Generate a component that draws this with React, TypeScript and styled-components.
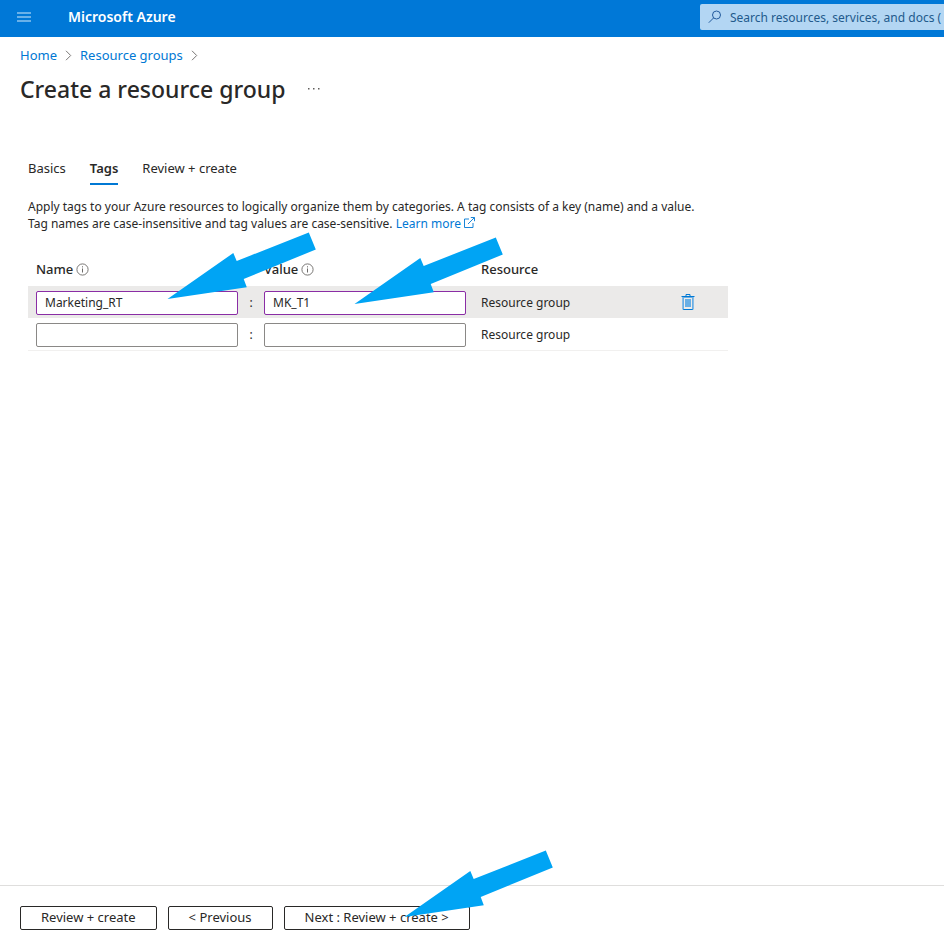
import React from "react";
import styled, { createGlobalStyle } from "styled-components";

const GlobalStyle = createGlobalStyle`
  *, *::before, *::after { box-sizing: border-box; }
  body {
    margin: 0;
    background: #fff;
    color: #292827;
    font: 13px/17px "Noto Sans", "Open Sans", sans-serif;
  }
  button, input { font: inherit; color: inherit; }
  a { color: #0078d4; text-decoration: none; }
`;

const Page = styled.div`
  display: flex;
  flex-direction: column;
  min-height: 100vh;
  overflow-x: hidden;
`;

const TopBar = styled.header`
  display: flex;
  align-items: center;
  height: 37px;
  padding: 0 0 3px 16px;
  background: #0078d7;
`;

const IconButton = styled.button`
  display: flex;
  align-items: center;
  justify-content: center;
  padding: 0;
  border: 0;
  background: transparent;
  cursor: pointer;
`;

const Brand = styled.a`
  margin: 0 auto 0 36px;
  color: #fff;
  font-size: 14px;
  font-weight: 600;
  line-height: 20px;
`;

const SearchBox = styled.label`
  display: flex;
  align-items: center;
  gap: 8px;
  flex: 0 1 244px;
  height: 26px;
  padding-left: 8px;
  border-radius: 2px 0 0 2px;
  background: #b3d6f3;
`;

const SearchInput = styled.input`
  flex: 1;
  min-width: 0;
  padding: 0;
  border: 0;
  outline: 0;
  background: transparent;
  font-size: 12px;
  &::placeholder { color: #225a8c; opacity: 1; }
`;

const Breadcrumb = styled.nav`
  display: flex;
  align-items: center;
  gap: 8px;
  padding: 9px 20px 0;
  font-size: 13px;
  line-height: 19px;
`;

const TitleRow = styled.div`
  display: flex;
  align-items: center;
  gap: 20px;
  padding: 8px 20px 0;
`;

const Title = styled.h1`
  margin: 0;
  font-size: 23px;
  font-weight: 500;
  line-height: 32px;
`;

const Main = styled.main`
  flex: 1;
  padding: 50px 28px 24px;
`;

const TabList = styled.div`
  display: flex;
  gap: 24px;
`;

const Tab = styled.button<{ $active?: boolean }>`
  height: 30px;
  padding: 0 0 1px;
  border: 0;
  border-bottom: 2px solid ${(p) => (p.$active ? "#0078d4" : "transparent")};
  background: transparent;
  font-weight: ${(p) => (p.$active ? 600 : 400)};
  cursor: pointer;
`;

const Description = styled.p`
  max-width: 720px;
  margin: 13px 0 0;
  font-size: 12px;
`;

const Line = styled.span`
  display: block;
`;

const TagTable = styled.table`
  width: 100%;
  max-width: 700px;
  margin-top: 20px;
  border-spacing: 0;
  table-layout: fixed;
`;

const Col = styled.col<{ $width?: number }>`
  width: ${(p) => (p.$width ? `${p.$width}px` : "auto")};
`;

const HeadCell = styled.th<{ $first?: boolean }>`
  height: 34px;
  padding: 0 0 0 ${(p) => (p.$first ? 8 : 0)}px;
  font-weight: 500;
  text-align: left;
`;

const HeadLabel = styled.span`
  display: flex;
  align-items: center;
  gap: 3px;
`;

const Cell = styled.td<{ $first?: boolean; $center?: boolean }>`
  height: 32px;
  padding: 1px 0 0 ${(p) => (p.$first ? 8 : 0)}px;
  font-size: 12px;
  text-align: ${(p) => (p.$center ? "center" : "left")};
`;

const TagRow = styled.tr<{ $filled?: boolean }>`
  background: ${(p) => (p.$filled ? "#ebeae9" : "transparent")};
  &:last-child > ${Cell} {
    height: 33px;
    border-bottom: 1px solid #f1f0ef;
  }
`;

const DeleteButton = styled(IconButton)`
  margin: 0 auto;
`;

const Field = styled.div`
  position: relative;
  display: flex;
`;

const TextInput = styled.input<{ $edited?: boolean }>`
  width: 100%;
  height: 24px;
  padding: 0 8px;
  border: 1px solid ${(p) => (p.$edited ? "#8a2da5" : "#8a8886")};
  border-radius: 2px;
  background: #fff;
`;

const Footer = styled.footer`
  display: flex;
  gap: 11px;
  padding: 20px 20px 11px;
  border-top: 1px solid #dfdedd;
`;

const ActionWrap = styled.div`
  position: relative;
  display: flex;
`;

const ActionButton = styled.button`
  height: 24px;
  padding: 0 20px 2px;
  border: 1px solid #292827;
  border-radius: 2px;
  background: #fff;
  line-height: 20px;
  white-space: nowrap;
  cursor: pointer;
`;

const ArrowSvg = styled.svg<{ $left: number; $top: number }>`
  position: absolute;
  left: ${(p) => p.$left}px;
  top: ${(p) => p.$top}px;
  z-index: 1;
  pointer-events: none;
`;

const Arrow = ({ left, top }: { left: number; top: number }) => (
  <ArrowSvg $left={left} $top={top} width="150" height="68" viewBox="0 0 150 68" aria-hidden="true">
    <path d="M0.5 67 66.3 21 69.7 29 141.8 0.5 148.8 17.5 76.7 47 79.8 55.3Z" fill="#00a4f4" />
  </ArrowSvg>
);

const Chevron = () => (
  <svg width="7" height="11" viewBox="0 0 7 11" fill="none" stroke="#797775" aria-hidden="true">
    <path d="M1 .8 5.7 5.5 1 10.2" />
  </svg>
);

const InfoIcon = () => (
  <svg width="13" height="13" viewBox="0 0 13 13" fill="none" stroke="#6b6967" aria-hidden="true">
    <circle cx="6.5" cy="6.5" r="5.6" strokeWidth=".9" />
    <path d="M6.5 5.5v4M6.5 3.3v1.1" />
  </svg>
);

const ExternalIcon = () => (
  <svg width="11" height="11" viewBox="0 0 11 11" fill="none" stroke="#0078d4" strokeWidth=".9" aria-hidden="true">
    <path d="M5 2H.5v8.500h8.500V6M4 7 10.300.7M6.800.5h3.700v3.700" />
  </svg>
);

const TrashIcon = () => (
  <svg width="14" height="17" viewBox="0 0 14 17" aria-hidden="true">
    <path d="M2 3h10v12H2z" fill="#69afe5" />
    <path d="M3 4h8v11H3z" fill="#edebe9" />
    <path d="M4 5h6v8H4z" fill="#69afe5" />
    <path d="M.5 2.500h13M5 2V.5h4V2M2 15.500h10" fill="none" stroke="#0078d4" />
    <path d="M2 3v12.500M12 3v12.500" fill="none" stroke="#69afe5" strokeWidth="1.500" />
  </svg>
);

const tags = [
  { name: "Marketing_RT", value: "MK_T1", resource: "Resource group" },
  { name: "", value: "", resource: "Resource group" },
];

export default function App() {
  return (
    <Page>
      <GlobalStyle />
      <TopBar>
        <IconButton type="button" aria-label="Show portal menu">
          <svg width="16" height="12" viewBox="0 0 16 12" fill="none" stroke="#8cc3f0" aria-hidden="true">
            <path d="M1 2h14M1 6h14M1 10h14" strokeWidth="1.500" />
          </svg>
        </IconButton>
        <Brand href="#">Microsoft Azure</Brand>
        <SearchBox>
          <svg width="14" height="14" viewBox="0 0 14 14" fill="none" stroke="#225a9c" aria-hidden="true">
            <circle cx="8.500" cy="5" r="4" />
            <path d="M5.600 7.900.8 12.700" />
          </svg>
          <SearchInput
            type="text"
            aria-label="Search resources, services, and docs"
            placeholder="Search resources, services, and docs ("
          />
        </SearchBox>
      </TopBar>

      <Breadcrumb aria-label="Breadcrumb">
        <a href="#">Home</a>
        <Chevron />
        <a href="#">Resource groups</a>
        <Chevron />
      </Breadcrumb>
      <TitleRow>
        <Title>Create a resource group</Title>
        <IconButton type="button" aria-label="More actions">
          <svg width="16" height="4" viewBox="0 0 16 4" fill="#605e5c" aria-hidden="true">
            <path d="M2 1h1.500v1.500H2zM7 1h1.500v1.500H7zM12 1h1.500v1.500H12z" />
          </svg>
        </IconButton>
      </TitleRow>

      <Main>
        <TabList role="tablist">
          <Tab type="button" role="tab" aria-selected="false">Basics</Tab>
          <Tab type="button" role="tab" aria-selected="true" $active>Tags</Tab>
          <Tab type="button" role="tab" aria-selected="false">Review + create</Tab>
        </TabList>
        <Description>
          <Line>
            Apply tags to your Azure resources to logically organize them by categories. A tag consists of a key
            (name) and a value.
          </Line>
          <Line>
            Tag names are case-insensitive and tag values are case-sensitive.{" "}
            <a href="#">
              Learn more <ExternalIcon />
            </a>
          </Line>
        </Description>

        <TagTable>
          <colgroup>
            <Col $width={210} />
            <Col $width={26} />
            <Col $width={202} />
            <Col $width={15} />
            <Col />
            <Col $width={80} />
          </colgroup>
          <thead>
            <tr>
              <HeadCell $first>
                <HeadLabel>Name <InfoIcon /></HeadLabel>
              </HeadCell>
              <HeadCell />
              <HeadCell>
                <HeadLabel>Value <InfoIcon /></HeadLabel>
              </HeadCell>
              <HeadCell />
              <HeadCell>Resource</HeadCell>
              <HeadCell />
            </tr>
          </thead>
          <tbody>
            {tags.map((tag, i) => {
              const filled = tag.name !== "";
              return (
                <TagRow key={i} $filled={filled}>
                  <Cell $first>
                    <Field>
                      <TextInput type="text" aria-label={`Name ${i + 1}`} defaultValue={tag.name} $edited={filled} />
                      {filled && <Arrow left={131} top={-59} />}
                    </Field>
                  </Cell>
                  <Cell $center>:</Cell>
                  <Cell>
                    <Field>
                      <TextInput type="text" aria-label={`Value ${i + 1}`} defaultValue={tag.value} $edited={filled} />
                      {filled && <Arrow left={90} top={-54} />}
                    </Field>
                  </Cell>
                  <Cell />
                  <Cell>{tag.resource}</Cell>
                  <Cell $center>
                    {filled && (
                      <DeleteButton type="button" aria-label="Delete tag">
                        <TrashIcon />
                      </DeleteButton>
                    )}
                  </Cell>
                </TagRow>
              );
            })}
          </tbody>
        </TagTable>
      </Main>

      <Footer>
        <ActionButton type="button">Review + create</ActionButton>
        <ActionButton type="button">&lt; Previous</ActionButton>
        <ActionWrap>
          <ActionButton type="button">Next : Review + create &gt;</ActionButton>
          <Arrow left={120} top={-56} />
        </ActionWrap>
      </Footer>
    </Page>
  );
}
